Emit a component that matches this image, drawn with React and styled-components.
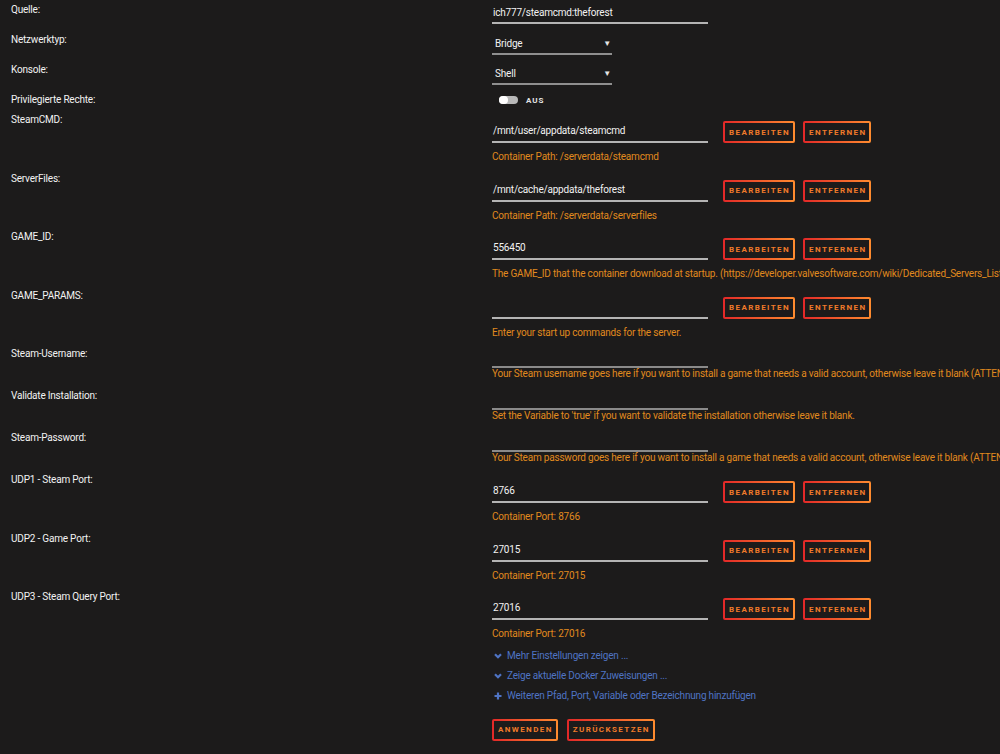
import React from "react";
import styled, { createGlobalStyle } from "styled-components";

const GlobalStyle = createGlobalStyle`
  html, body {
    margin: 0;
    padding: 0;
    background: #1c1b1b;
    overflow: hidden;
  }
  body {
    font-family: Roboto, "Liberation Sans", sans-serif;
    color: #f2f2f2;
    letter-spacing: -0.2px;
  }
`;

const Page = styled.div`
  width: 1000px;
  height: 754px;
  overflow: hidden;
  padding-left: 11px;
  box-sizing: border-box;
  background: #1c1b1b;
`;

const Row = styled.div`
  display: grid;
  grid-template-columns: 481px 1fr;
  height: ${(p) => p.$h}px;
`;

const Label = styled.div`
  padding-top: 1px;
  font-size: 10px;
  line-height: 18px;
  color: #f2f2f2;
  white-space: nowrap;
`;

const Content = styled.div`
  padding-top: ${(p) => p.$pt}px;
  min-width: 0;
  white-space: nowrap;
`;

const Line = styled.div`
  display: flex;
  align-items: flex-start;
`;

const TextInput = styled.div`
  width: 216px;
  height: ${(p) => p.$h}px;
  box-sizing: border-box;
  border-bottom: 2px solid ${(p) => (p.$dim ? "#8a8a8a" : "#b4b4b4")};
  font-size: 10px;
  line-height: ${(p) => p.$h - 2}px;
  color: #f2f2f2;
  padding-left: 1px;
`;

const Select = styled.div`
  width: 120px;
  height: 22px;
  box-sizing: border-box;
  border-bottom: 2px solid #8f8f8f;
  display: flex;
  align-items: center;
  justify-content: space-between;
  padding: 0 1px 0 3px;
  font-size: 10px;
  color: #f2f2f2;
`;

const Arrow = styled.span`
  font-size: 8px;
  color: #e6e6e6;
`;

const ToggleWrap = styled.div`
  display: flex;
  align-items: center;
  height: 20px;
  padding-left: 7px;
`;

const Track = styled.div`
  width: 19px;
  height: 8px;
  border-radius: 4px;
  background: #b8b8b8;
  display: flex;
`;

const Knob = styled.div`
  width: 9px;
  height: 8px;
  border-radius: 4px;
  background: #ffffff;
`;

const ToggleText = styled.span`
  margin-left: 8px;
  font-size: 8px;
  font-weight: 700;
  letter-spacing: 1px;
  color: #e4e4e4;
`;

const Button = styled.button`
  height: 22px;
  margin-left: ${(p) => p.$ml}px;
  padding: 0 3px 0 4px;
  border: 2px solid transparent;
  border-radius: 2px;
  background: linear-gradient(#1c1b1b, #1c1b1b) padding-box,
    linear-gradient(90deg, #e22828, #ff8c2f) border-box;
  font-family: Roboto, "Liberation Sans", sans-serif;
  font-size: 8px;
  font-weight: 700;
  letter-spacing: 1.4px;
  color: #f07a2a;
  text-transform: uppercase;
  box-sizing: border-box;
  cursor: pointer;
`;

const Desc = styled.div`
  margin-top: ${(p) => p.$mt}px;
  font-size: 10px;
  line-height: ${(p) => p.$lh}px;
  color: #e08a1e;
  white-space: nowrap;
`;

const Links = styled.div`
  display: flex;
  flex-direction: column;
`;

const LinkItem = styled.a`
  display: flex;
  align-items: center;
  gap: 5px;
  height: 20px;
  padding-left: 2px;
  font-size: 10px;
  color: #4f74c4;
  text-decoration: none;
`;

const ActionBar = styled.div`
  display: flex;
  gap: 9px;
  margin-top: 13px;
`;

const Chevron = () => (
  <svg width="8" height="6" viewBox="0 0 8 6">
    <path d="M1 1.2 L4 4.2 L7 1.2" fill="none" stroke="#4f74c4" strokeWidth="2.2" />
  </svg>
);

const Plus = () => (
  <svg width="8" height="8" viewBox="0 0 8 8">
    <path d="M4 0.5 V7.5 M0.5 4 H7.5" fill="none" stroke="#4f74c4" strokeWidth="2.2" />
  </svg>
);

const pathRows = [
  { label: "SteamCMD:", value: "/mnt/user/appdata/steamcmd", desc: "Container Path: /serverdata/steamcmd" },
  { label: "ServerFiles:", value: "/mnt/cache/appdata/theforest", desc: "Container Path: /serverdata/serverfiles" },
  {
    label: "GAME_ID:",
    value: "556450",
    desc: "The GAME_ID that the container download at startup. (https://developer.valvesoftware.com/wiki/Dedicated_Servers_List)",
  },
  { label: "GAME_PARAMS:", value: "", desc: "Enter your start up commands for the server." },
];

const varRows = [
  {
    label: "Steam-Username:",
    desc: "Your Steam username goes here if you want to install a game that needs a valid account, otherwise leave it blank (ATTENTION: You have to disable Steam Guard)!",
  },
  {
    label: "Validate Installation:",
    desc: "Set the Variable to 'true' if you want to validate the installation otherwise leave it blank.",
  },
  {
    label: "Steam-Password:",
    desc: "Your Steam password goes here if you want to install a game that needs a valid account, otherwise leave it blank (ATTENTION: You have to disable Steam Guard)!",
  },
];

const portRows = [
  { label: "UDP1 - Steam Port:", value: "8766", desc: "Container Port: 8766" },
  { label: "UDP2 - Game Port:", value: "27015", desc: "Container Port: 27015" },
  { label: "UDP3 - Steam Query Port:", value: "27016", desc: "Container Port: 27016" },
];

const PathRow = ({ label, value, desc }) => (
  <Row $h={58.5}>
    <Label>{label}</Label>
    <Content $pt={11}>
      <Line>
        <TextInput $h={22}>{value}</TextInput>
        <Button $ml={15}>Bearbeiten</Button>
        <Button $ml={8}>Entfernen</Button>
      </Line>
      <Desc $mt={6} $lh={16}>
        {desc}
      </Desc>
    </Content>
  </Row>
);

const VarRow = ({ label, desc }) => (
  <Row $h={42}>
    <Label>{label}</Label>
    <Content $pt={2}>
      <TextInput $h={22} $dim />
      <Desc $mt={0} $lh={12}>
        {desc}
      </Desc>
    </Content>
  </Row>
);

export default function App() {
  return (
    <>
      <GlobalStyle />
      <Page>
        <Row $h={30}>
          <Label>Quelle:</Label>
          <Content $pt={4}>
            <TextInput $h={20}>ich777/steamcmd:theforest</TextInput>
          </Content>
        </Row>
        <Row $h={30}>
          <Label>Netzwerktyp:</Label>
          <Content $pt={3}>
            <Select>
              Bridge<Arrow>▼</Arrow>
            </Select>
          </Content>
        </Row>
        <Row $h={30}>
          <Label>Konsole:</Label>
          <Content $pt={3}>
            <Select>
              Shell<Arrow>▼</Arrow>
            </Select>
          </Content>
        </Row>
        <Row $h={20}>
          <Label>Privilegierte Rechte:</Label>
          <Content $pt={0}>
            <ToggleWrap>
              <Track>
                <Knob />
              </Track>
              <ToggleText>AUS</ToggleText>
            </ToggleWrap>
          </Content>
        </Row>
        {pathRows.map((r) => (
          <PathRow key={r.label} {...r} />
        ))}
        {varRows.map((r) => (
          <VarRow key={r.label} {...r} />
        ))}
        {portRows.map((r) => (
          <PathRow key={r.label} {...r} />
        ))}
        <Row $h={110}>
          <Label />
          <Content $pt={0}>
            <Links>
              <LinkItem href="#">
                <Chevron />
                Mehr Einstellungen zeigen ...
              </LinkItem>
              <LinkItem href="#">
                <Chevron />
                Zeige aktuelle Docker Zuweisungen ...
              </LinkItem>
              <LinkItem href="#">
                <Plus />
                Weiteren Pfad, Port, Variable oder Bezeichnung hinzufügen
              </LinkItem>
            </Links>
            <ActionBar>
              <Button $ml={0}>Anwenden</Button>
              <Button $ml={0}>Zurücksetzen</Button>
            </ActionBar>
          </Content>
        </Row>
      </Page>
    </>
  );
}
